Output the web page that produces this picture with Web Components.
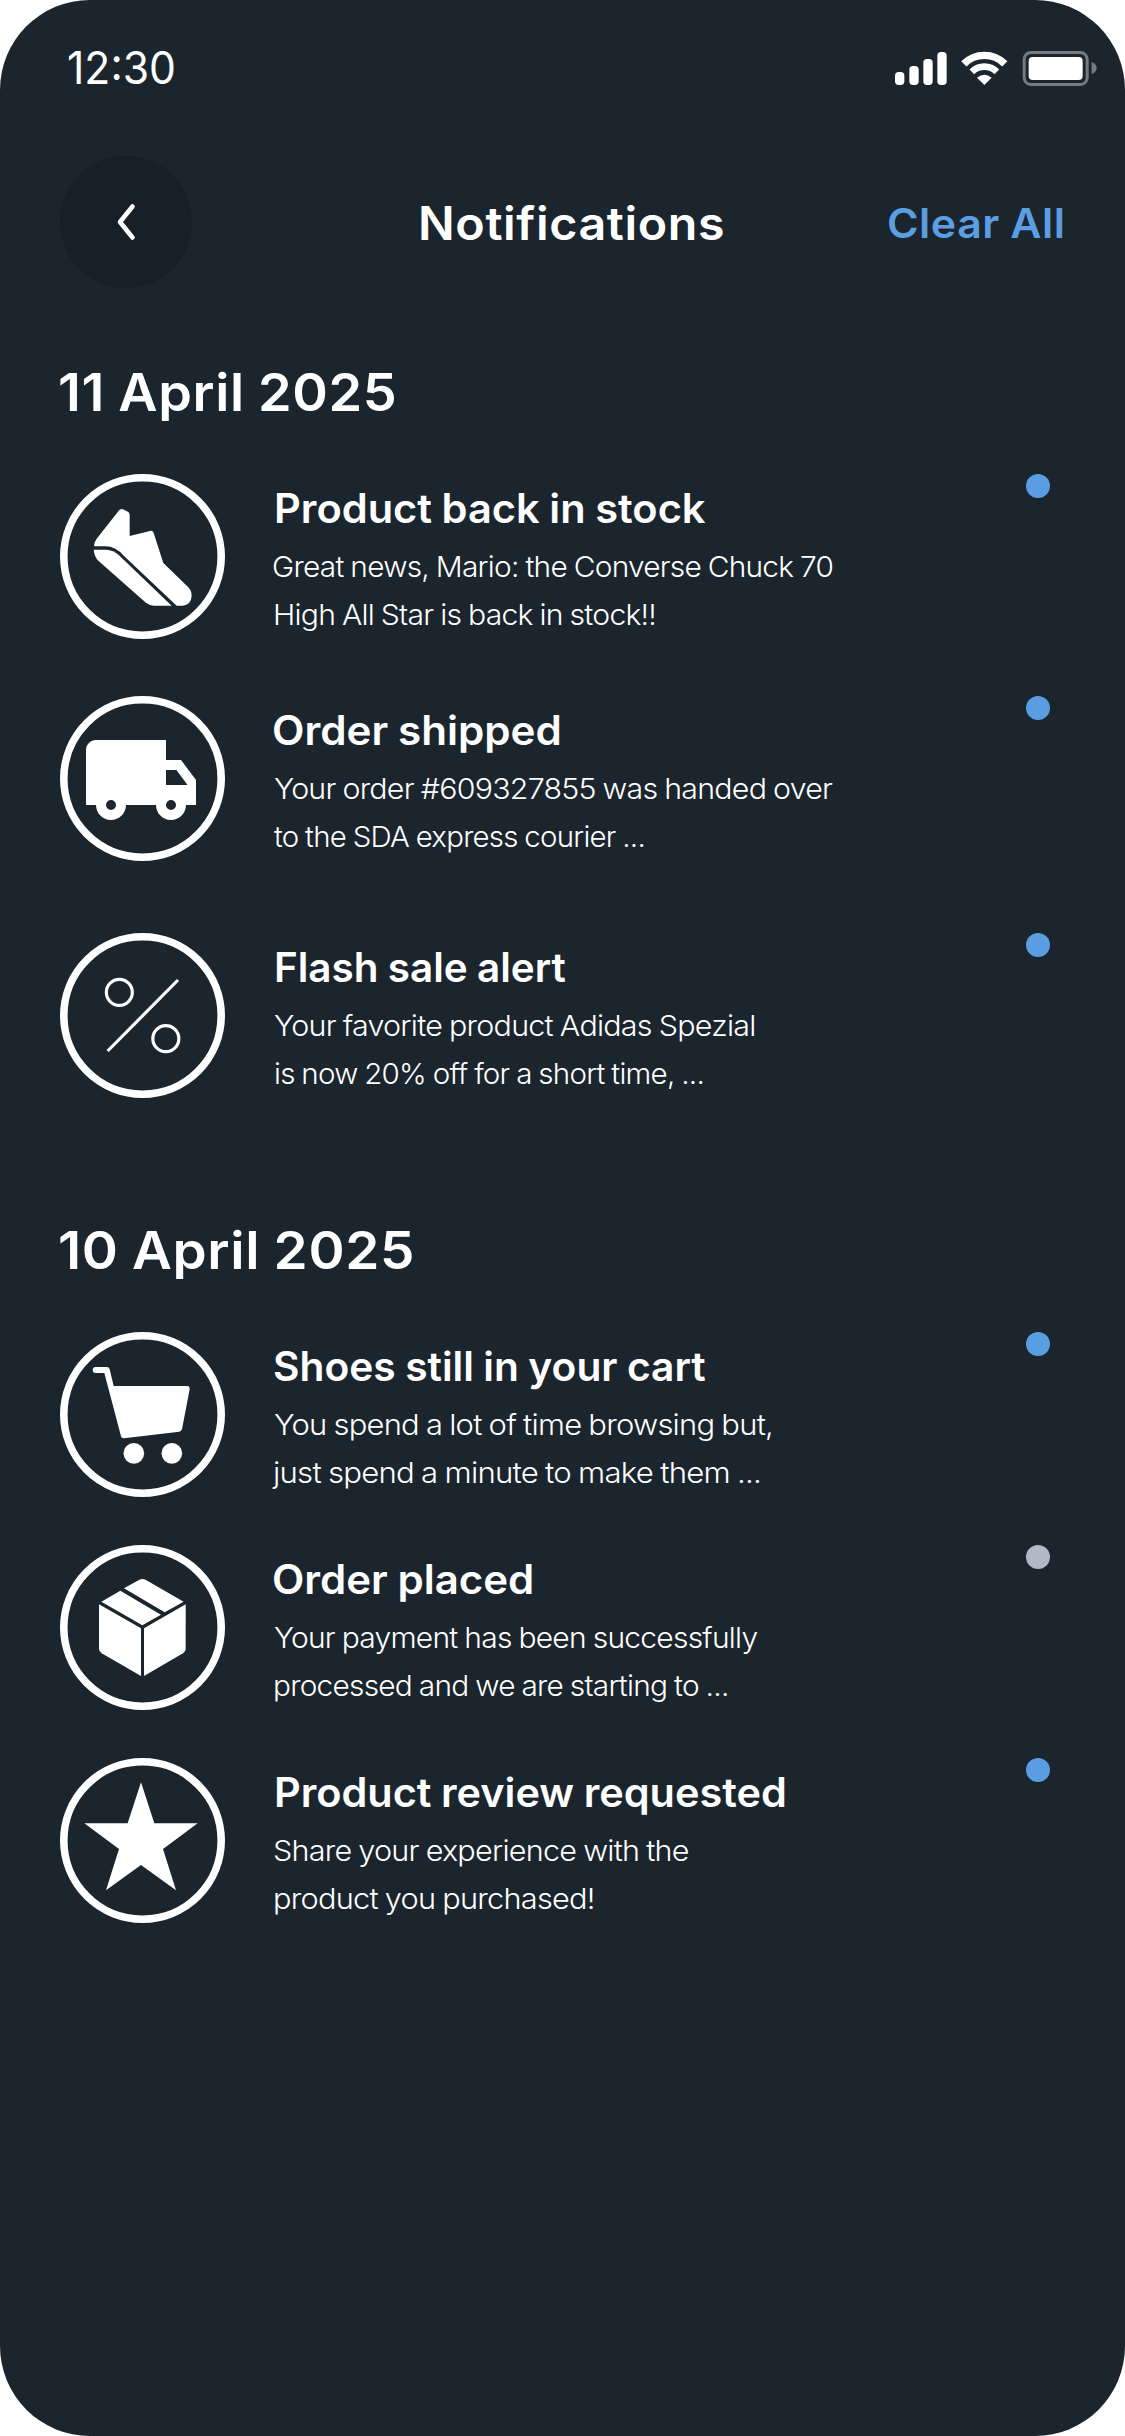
<!DOCTYPE html>
<html lang="en">
<head>
<meta charset="utf-8">
<title>Notifications</title>
<style>
html,body{margin:0;padding:0;background:#fff}
body{font-family:Inter,"Open Sans",sans-serif;color:#fff}
</style>
</head>
<body>
<phone-screen>
  <status-bar slot="status"></status-bar>
  <app-header slot="header"></app-header>
  <day-section>
    <fit-text slot="heading" track=".012" word="-.02" ink="335">11 April 2025</fit-text>
    <notice-row icon="shoe">
      <fit-text slot="title" word="-.02" ink="429.5" inset="4">Product back in stock</fit-text>
      <fit-text track="-.025" word="-.03" ink="560" inset="1.5">Great news, Mario: the Converse Chuck 70</fit-text>
      <fit-text track="-.025" word="-.03" ink="379.5" inset="3.5">High All Star is back in stock!!</fit-text>
    </notice-row>
    <notice-row icon="truck" style="margin-top:57px">
      <fit-text slot="title" word="-.02" ink="285.5" inset="2.5">Order shipped</fit-text>
      <fit-text track="-.025" word="-.03" ink="558.5" inset="1.5">Your order #609327855 was handed over</fit-text>
      <fit-text track="-.025" word="-.03" ink="369.5" inset="2">to the SDA express courier ...</fit-text>
    </notice-row>
    <notice-row icon="percent" style="margin-top:72px">
      <fit-text slot="title" word="-.02" ink="289.5" inset="4">Flash sale alert</fit-text>
      <fit-text track="-.025" word="-.03" ink="480.5" inset="1.5">Your favorite product Adidas Spezial</fit-text>
      <fit-text track="-.025" word="-.03" ink="427.5" inset="3">is now 20% off for a short time, ...</fit-text>
    </notice-row>
  </day-section>
  <day-section style="margin-top:123px">
    <fit-text slot="heading" track=".012" word="-.02" ink="352.5">10 April 2025</fit-text>
    <notice-row icon="cart">
      <fit-text slot="title" word="-.02" ink="431.5" inset="2">Shoes still in your cart</fit-text>
      <fit-text track="-.025" word="-.03" ink="497.5" inset="1.5">You spend a lot of time browsing but,</fit-text>
      <fit-text track="-.025" word="-.03" ink="487.5" inset="0">just spend a minute to make them ...</fit-text>
    </notice-row>
    <notice-row icon="box" read style="margin-top:48px">
      <fit-text slot="title" word="-.02" ink="258" inset="2.5">Order placed</fit-text>
      <fit-text track="-.025" word="-.03" ink="484" inset="1.5">Your payment has been successfully</fit-text>
      <fit-text track="-.025" word="-.03" ink="452" inset="3.5">processed and we are starting to ...</fit-text>
    </notice-row>
    <notice-row icon="star" style="margin-top:48px">
      <fit-text slot="title" word="-.02" ink="508.5" inset="4">Product review requested</fit-text>
      <fit-text track="-.025" word="-.03" ink="414.5" inset="2">Share your experience with the</fit-text>
      <fit-text track="-.025" word="-.03" ink="318" inset="3.5">product you purchased!</fit-text>
    </notice-row>
  </day-section>
</phone-screen>

<script>
function define(name, markup, setup) {
  customElements.define(name, class extends HTMLElement {
    connectedCallback() {
      if (this.shadowRoot) return;
      this.attachShadow({ mode: 'open' }).innerHTML = markup;
      if (setup) setup(this);
    }
  });
}

define('phone-screen', `<style>
  :host{display:flex;flex-direction:column;box-sizing:border-box;width:1125px;height:2436px;
    border-radius:90px;background:#1b252e;overflow:hidden}
</style><slot name="status"></slot><slot name="header"></slot><slot></slot>`);

define('status-bar', `<style>
  :host{display:flex;justify-content:space-between;align-items:flex-start;box-sizing:border-box;
    height:156px;padding:38px 28px 0 69px;font-size:44.7px;line-height:60px;font-weight:400}
  svg{display:block;width:202px;height:37.33px;margin-top:12px}
</style>
<fit-text ink="105">12:30</fit-text>
<svg viewBox="46 90 606 112">
  <g fill="#fff">
    <rect x="46" y="156" width="28" height="39" rx="11"/><rect x="89" y="138" width="28" height="57" rx="11"/>
    <rect x="131" y="117" width="28" height="78" rx="11"/><rect x="173" y="96" width="28" height="99" rx="11"/>
    <path d="M314 195L292 173Q314 155 336 173Z"/>
    <rect x="447" y="111" width="162" height="69" rx="12"/>
  </g>
  <g fill="none" stroke="#fff">
    <path stroke-width="22" d="M252.500 131.500A87 87 0 0 1 375.500 131.500"/>
    <path stroke-width="20" d="M276.500 155.500A53 53 0 0 1 351.500 155.500"/>
  </g>
  <rect x="433.500" y="97.500" width="189" height="96" rx="20" fill="none" stroke="#737c82" stroke-width="9"/>
  <path fill="#737c82" d="M636 126Q651 132 651 144Q651 156 636 162Z"/>
</svg>`);

define('app-header', `<style>
  :host{display:flex;align-items:center;height:132px;padding:0 63px 0 60px;line-height:60px}
  button{all:unset;display:flex;align-items:center;justify-content:center;width:132px;height:132px;
    border-radius:50%;background:#171f28}
  svg{display:block;width:20px;height:38px}
  .title{margin:1px 0 0 229px;font-size:46.2px;font-weight:600}
  .clear{margin:2px 0 0 auto;font-size:40.8px;font-weight:570;color:#5c9ee2}
</style>
<button aria-label="Back"><svg viewBox="0 0 20 38"><path d="M16.500 3.500L4 19L16.500 34.500" fill="none" stroke="#fff" stroke-width="4.600" stroke-linecap="round" stroke-linejoin="round"/></svg></button>
<fit-text class="title" track=".012" ink="302">Notifications</fit-text>
<fit-text class="clear" track=".012" word="-.02" ink="173">Clear All</fit-text>`);

define('day-section', `<style>
  :host{display:flex;flex-direction:column;padding:0 75px 0 60px;margin-top:75px}
  .heading{font-size:52px;line-height:60px;font-weight:590;margin-bottom:51px}
</style><div class="heading"><slot name="heading"></slot></div><slot></slot>`);

const icons = {
  shoe: `<g transform="translate(-10 -14) scale(.33333)">
    <path d="M133 259Q131 249 140 236L205 154Q212 144 222 149L234 155Q239 158 239 164V228L300 213Q308 211 311 219L340 309L415 382Q425 391 425 408Q423 435 398 437H380L222 288Q196 258 165 259Z"/>
    <path d="M131 269H168Q190 270 207 286L365 437H312Q298 437 286 427L145 302Q133 290 131 269Z"/></g>`,
  truck: `<g transform="translate(21 24) scale(5)"><path fill-rule="evenodd" d="M20 8h-3V4H3c-1.100 0-2 .9-2 2v11h2c0 1.660 1.340 3 3 3s3-1.340 3-3h6c0 1.660 1.340 3 3 3s3-1.340 3-3h2v-5l-3-4zM6 16a1 1 0 1 1 0 2 1 1 0 0 1 0-2zM18 16a1 1 0 1 1 0 2 1 1 0 0 1 0-2zM17 10h2.100l2.200 3H17z"/></g>`,
  percent: `<g transform="translate(-10 -13) scale(.33333)" fill="none" stroke="#fff" stroke-width="9.500">
    <circle cx="208" cy="217" r="39"/><circle cx="347.500" cy="356" r="39"/><path d="M173 393L384 180"/></g>`,
  cart: `<g transform="translate(-10 -12) scale(.33333)">
    <path d="M137 141H171Q177 141 179 148L191 198H412Q420 199 419 208L396 328Q394 334 388 335L222 355Q215 356 213 349L163 159H137A9 9 0 0 1 137 141Z"/>
    <circle cx="251.500" cy="400" r="31"/><circle cx="365.500" cy="400" r="31"/></g>`,
  box: `<g transform="translate(-10 -225) scale(.33333)">
    <path d="M222 805L267 780Q277 774 288 780L401 845L344 877Z"/><path d="M211 812L333 884L277 916L154 845Z"/>
    <path d="M147 853L273 925V1068L155 1000Q147 995 147 986Z"/><path d="M407 853L282 925V1068L399 1000Q407 995 407 986Z"/></g>`,
  star: `<g transform="translate(-10 -38) scale(.33333)">
    <path d="M273 187L313 310H443L339 387L378 511L273 435L168 511L207 387L103 310H233Z"/></g>`
};

define('notice-row', `<style>
  :host{display:flex;align-items:flex-start;height:165px}
  svg{display:block;width:165px;height:165px;flex:none}
  .copy{display:flex;flex-direction:column;padding-top:10px;margin-left:47px;flex:1;
    font-size:29px;line-height:48px;font-weight:300}
  .title{font-size:40.3px;line-height:50px;font-weight:580;margin-bottom:9px}
  i{display:block;width:24px;height:24px;border-radius:50%;background:#5b9de2;flex:none}
  :host([read]) i{background:#b1b8c6}
</style>
<svg viewBox="0 0 165 165" fill="#fff"></svg>
<div class="copy"><div class="title"><slot name="title"></slot></div><slot></slot></div><i></i>`,
host => {
  host.shadowRoot.querySelector('svg').innerHTML =
    '<circle cx="82.500" cy="82.500" r="78.700" fill="none" stroke="#fff" stroke-width="7.600"/>' + icons[host.getAttribute('icon')];
});

/* A single line of text, tracked in ems and widened so that its ink spans a given width. */
const pen = document.createElement('canvas').getContext('2d');
define('fit-text', `<style>
  :host{display:block;white-space:nowrap}
  span{display:block;width:max-content;transform-origin:0 50%}
</style><span><slot></slot></span>`, host => {
  const text = host.textContent, style = getComputedStyle(host), em = parseFloat(style.fontSize);
  const num = name => +host.getAttribute(name) || 0;
  pen.font = style.fontWeight + ' ' + style.fontSize + ' ' + style.fontFamily;
  const m = pen.measureText(text), ink = num('ink');
  const track = num('track') * em, word = num('word') * em;
  const natural = m.actualBoundingBoxLeft + m.actualBoundingBoxRight
    + track * (text.length - 1) + word * (text.split(' ').length - 1);
  const scale = ink / natural;
  const span = host.shadowRoot.querySelector('span');
  host.style.width = ink + 'px';
  span.style.letterSpacing = track + 'px';
  span.style.wordSpacing = word + 'px';
  span.style.marginLeft = m.actualBoundingBoxLeft * scale + num('inset') + 'px';
  span.style.transform = 'scaleX(' + scale + ')';
});
</script>
</body>
</html>
